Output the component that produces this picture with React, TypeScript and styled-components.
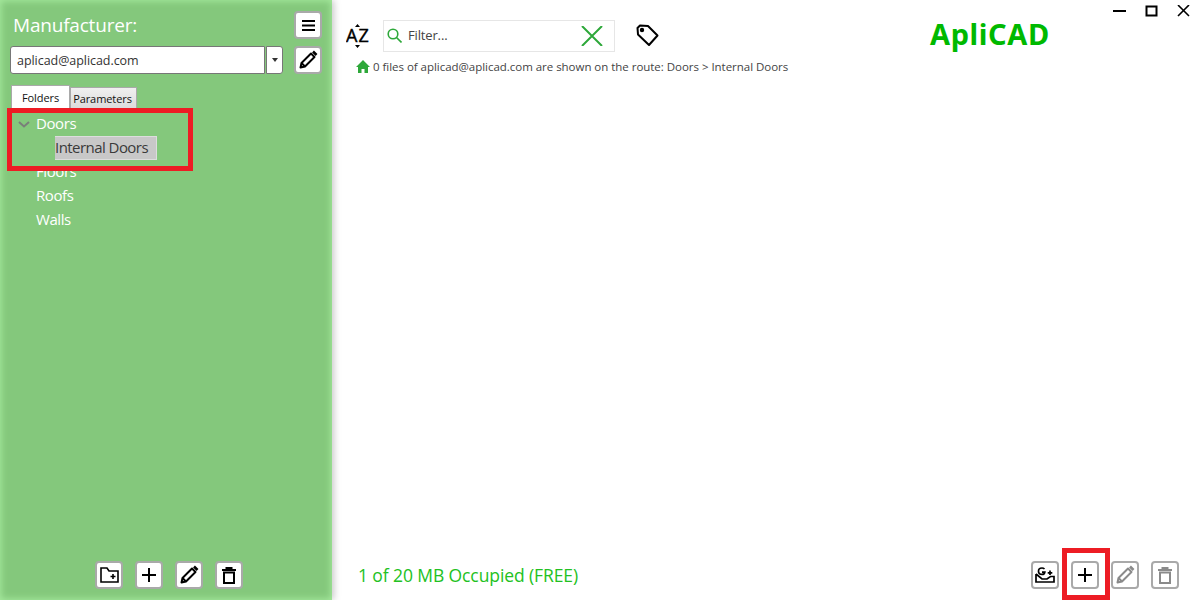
import React from "react";
import styled, {createGlobalStyle} from "styled-components";

const GlobalStyle = createGlobalStyle`
  html, body {
    margin: 0;
    padding: 0;
    background: #fff;
    font-family: "Open Sans", "Noto Sans", sans-serif;
  }
`;

const Window = styled.div`
  display: flex;
  width: 1200px;
  height: 600px;
  overflow: hidden;
  position: relative;
`;

const Sidebar = styled.aside`
  position: relative;
  width: 332px;
  height: 600px;
  flex-shrink: 0;
  box-sizing: border-box;
  padding: 11px 10px 11px 10px;
  display: flex;
  flex-direction: column;
  background: #84c87c;
  box-shadow: inset 0 0 7px 1px #a6ea9e, 2px 0 7px rgba(0, 0, 0, 0.22);
`;

const SideHeader = styled.div`
  display: flex;
  justify-content: space-between;
  align-items: center;
  height: 28px;
  padding-left: 3px;
`;

const SideTitle = styled.h1`
  margin: 0;
  font-size: 19px;
  font-weight: 400;
  letter-spacing: -0.2px;
  color: #fff;
`;

const IconButton = styled.button<{$muted?: boolean}>`
  width: 28px;
  height: 28px;
  padding: 0;
  box-sizing: border-box;
  display: flex;
  align-items: center;
  justify-content: center;
  background: #fff;
  border: 2px solid #a9a9a9;
  border-radius: 4px;
  color: ${p => (p.$muted ? "#8a8a8a" : "#000")};
`;

const ComboRow = styled.div`
  display: flex;
  align-items: center;
  height: 28px;
  margin-top: 7px;
`;

const ComboField = styled.div`
  width: 256px;
  height: 28px;
  box-sizing: border-box;
  display: flex;
  align-items: center;
  padding-left: 6px;
  background: #fff;
  border: 1px solid #777;
  border-radius: 3px 0 0 3px;
  font-size: 12.5px;
  letter-spacing: -0.05px;
  color: #333;
`;

const ComboArrow = styled.div`
  width: 17px;
  height: 28px;
  margin-left: 1px;
  box-sizing: border-box;
  display: flex;
  align-items: center;
  justify-content: center;
  background: #fff;
  border: 1px solid #777;
  border-radius: 0 3px 3px 0;

  &::after {
    content: "";
    border-left: 3.5px solid transparent;
    border-right: 3.5px solid transparent;
    border-top: 4px solid #333;
  }
`;

const ComboEdit = styled.div`
  margin-left: 11px;
`;

const Tabs = styled.div`
  display: flex;
  align-items: flex-end;
  height: 23px;
  margin: 11px 0 0 1px;
`;

const Tab = styled.div<{$active?: boolean}>`
  box-sizing: border-box;
  display: flex;
  justify-content: center;
  align-items: center;
  height: ${p => (p.$active ? "23px" : "21px")};
  width: ${p => (p.$active ? "59px" : "67px")};
  padding-right: ${p => (p.$active ? "0" : "2px")};
  border: 1px solid #a9a9a9;
  border-bottom: none;
  background: ${p => (p.$active ? "#fff" : "linear-gradient(#f0f0f0, #dcdcdc)")};
  font-size: 11px;
  letter-spacing: -0.08px;
  color: #111;
`;

const Tree = styled.ul`
  list-style: none;
  margin: 3px 0 0;
  padding: 0;
  flex: 1;
`;

const TreeRow = styled.li<{$depth?: number}>`
  display: flex;
  align-items: center;
  height: 24px;
  padding-left: ${p => (p.$depth ? "35px" : "26px")};
  position: relative;
  font-size: 15px;
  letter-spacing: -0.42px;
  color: #fff;
`;

const TreeChevron = styled.svg`
  position: absolute;
  left: 8px;
  top: 10px;
`;

const TreeSelected = styled.span`
  box-sizing: border-box;
  display: flex;
  align-items: center;
  height: 24px;
  margin: 1px 0 0 10px;
  padding-bottom: 1px;
  width: 102px;
  background: #c8c8c8;
  border: 1px solid #ddd;
  border-left-width: 0;
  letter-spacing: -0.55px;
  color: #3a3a3a;
`;

const SideFooter = styled.div`
  display: flex;
  justify-content: center;
  gap: 12px;
  padding-left: 6px;
`;

const RedFrame = styled.div<{$left: number; $top: number; $w: number; $h: number}>`
  position: absolute;
  left: ${p => p.$left}px;
  top: ${p => p.$top}px;
  width: ${p => p.$w}px;
  height: ${p => p.$h}px;
  box-sizing: border-box;
  border: 5px solid #ed1c24;
  pointer-events: none;
`;

const Main = styled.main`
  flex: 1;
  height: 600px;
  box-sizing: border-box;
  padding-left: 14px;
  display: flex;
  flex-direction: column;
`;

const TopRow = styled.div`
  display: flex;
  justify-content: space-between;
  height: 51px;
`;

const Toolbar = styled.div`
  display: flex;
  align-items: center;
  padding-top: 20px;
  height: 31px;
`;

const SortIcon = styled.svg`
  display: block;
`;

const FilterBox = styled.div`
  width: 232px;
  height: 32px;
  box-sizing: border-box;
  margin-left: 13px;
  display: flex;
  align-items: center;
  padding: 0 11px 0 3px;
  border: 1px solid #e6e6e6;
`;

const FilterText = styled.span`
  flex: 1;
  margin: 0 0 2px 6px;
  font-size: 13px;
  letter-spacing: -0.15px;
  color: #444;
`;

const TagIcon = styled.div`
  display: flex;
  margin-left: 21px;
`;

const Logo = styled.div`
  margin: 0 0 4px 271px;
  font-family: "Noto Sans", "Open Sans", sans-serif;
  font-size: 29px;
  font-weight: 700;
  letter-spacing: 0.6px;
  color: #00b900;
`;

const WindowControls = styled.div`
  display: flex;
  align-items: flex-start;
  gap: 19px;
  padding: 5px 10px 0 0;
`;

const Breadcrumb = styled.div`
  display: flex;
  align-items: center;
  gap: 3px;
  height: 30px;
  padding: 0 0 0 10px;
  font-size: 11.5px;
  letter-spacing: -0.03px;
  color: #444;
`;

const Spacer = styled.div`
  flex: 1;
`;

const StatusRow = styled.div`
  display: flex;
  justify-content: space-between;
  align-items: center;
  height: 28px;
  margin-bottom: 11px;
  padding: 0 21px 0 12px;
`;

const StatusText = styled.span`
  font-size: 17.5px;
  letter-spacing: -0.1px;
  color: #22c122;
`;

const ActionGroup = styled.div`
  display: flex;
  gap: 12px;
`;

const PlusIcon = () => (
    <svg width="16" height="16" viewBox="0 0 16 16" fill="none" stroke="currentColor" strokeWidth="2">
        <path d="M8 1v14M1 8h14"/>
    </svg>
);

const PencilIcon = () => (
    <svg width="20" height="20" viewBox="0 0 20 20" fill="none" stroke="currentColor" strokeWidth="2" strokeLinejoin="round">
        <path d="M2.5 17.5l1-4.5L13 3.5l3.5 3.5L7 16.5z"/>
        <path d="M3.5 13L7 16.5"/>
        <path d="M15 1.5l3.5 3.5" strokeWidth="2.6"/>
    </svg>
);

const TrashIcon = () => (
    <svg width="14" height="17" viewBox="0 0 14 17" fill="none" stroke="currentColor" strokeWidth="2">
        <path d="M0 3h14M4.5 3V1h5v2"/>
        <rect x="2" y="5.5" width="10" height="10.5"/>
    </svg>
);

const FolderPlusIcon = () => (
    <svg width="19" height="16" viewBox="0 0 19 16" fill="none" stroke="currentColor" strokeWidth="1.6">
        <path d="M1 1h6l2 3h9v11H1z"/>
        <path d="M13 7v5M10.5 9.5h5"/>
    </svg>
);

const FolderGIcon = () => (
    <svg width="20" height="16" viewBox="0 0 20 16" fill="none" stroke="currentColor" strokeWidth="1.7">
        <path d="M1 7v8h18V9.5h-3.5L12 12H7L1 7"/>
        <path d="M9.5 2C8.8 1.3 8 1 7 1 5 1 3.5 2.4 3.5 4.2S5 7.4 7 7.4c1.5 0 2.5-.8 2.8-2.2H7"/>
        <path d="M15 3.5V8M12.7 5.8h4.6"/>
    </svg>
);

const MenuIcon = () => (
    <svg width="13" height="11" viewBox="0 0 13 11" fill="currentColor">
        <rect width="13" height="2"/>
        <rect y="4.5" width="13" height="2"/>
        <rect y="9" width="13" height="2"/>
    </svg>
);

export default function App() {
    return (
        <Window>
            <GlobalStyle/>
            <Sidebar>
                <SideHeader>
                    <SideTitle>Manufacturer:</SideTitle>
                    <IconButton aria-label="Menu"><MenuIcon/></IconButton>
                </SideHeader>
                <ComboRow>
                    <ComboField>aplicad@aplicad.com</ComboField>
                    <ComboArrow/>
                    <ComboEdit>
                        <IconButton aria-label="Edit manufacturer"><PencilIcon/></IconButton>
                    </ComboEdit>
                </ComboRow>
                <Tabs>
                    <Tab $active>Folders</Tab>
                    <Tab>Parameters</Tab>
                </Tabs>
                <Tree>
                    <TreeRow>
                        <TreeChevron width="12" height="7" viewBox="0 0 12 7" fill="none" stroke="#7a7f7a" strokeWidth="2">
                            <path d="M1 1l5 4.5L11 1"/>
                        </TreeChevron>
                        Doors
                    </TreeRow>
                    <TreeRow $depth={1}><TreeSelected>Internal Doors</TreeSelected></TreeRow>
                    <TreeRow>Floors</TreeRow>
                    <TreeRow>Roofs</TreeRow>
                    <TreeRow>Walls</TreeRow>
                </Tree>
                <SideFooter>
                    <IconButton aria-label="New folder"><FolderPlusIcon/></IconButton>
                    <IconButton aria-label="Add"><PlusIcon/></IconButton>
                    <IconButton aria-label="Edit"><PencilIcon/></IconButton>
                    <IconButton aria-label="Delete"><TrashIcon/></IconButton>
                </SideFooter>
                <RedFrame $left={7} $top={108} $w={186} $h={63}/>
            </Sidebar>
            <Main>
                <TopRow>
                    <Toolbar>
                        <SortIcon width="24" height="24" viewBox="0 0 24 24">
                            <path d="M11.5 0l2.5 3h-5zM11.5 24l2.5-3h-5z" fill="#000"/>
                            <text x="0" y="18" fontSize="18" fontFamily="Open Sans, sans-serif" stroke="#000" strokeWidth="0.4" fill="#000">A</text>
                            <text x="12.5" y="18" fontSize="18" fontFamily="Open Sans, sans-serif" stroke="#000" strokeWidth="0.4" fill="#000">Z</text>
                        </SortIcon>
                        <FilterBox>
                            <svg width="15" height="15" viewBox="0 0 15 15" fill="none" stroke="#2ea83a" strokeWidth="1.6">
                                <circle cx="6" cy="6" r="4.8"/>
                                <path d="M9.5 9.5l5 5"/>
                            </svg>
                            <FilterText>Filter...</FilterText>
                            <svg width="22" height="20" viewBox="0 0 22 20" fill="none" stroke="#2ea83a" strokeWidth="2">
                                <path d="M1 0l20 20M21 0L1 20"/>
                            </svg>
                        </FilterBox>
                        <TagIcon>
                            <svg width="23" height="23" viewBox="0 0 23 23" fill="none" stroke="#000" strokeWidth="2" strokeLinejoin="round">
                                <path d="M1.5 4L4 1.5l8 .5 9.5 9.5-8.5 9.5L2 10.5z"/>
                                <circle cx="6" cy="6" r="1.2" fill="#000"/>
                            </svg>
                        </TagIcon>
                        <Logo>ApliCAD</Logo>
                    </Toolbar>
                    <WindowControls>
                        <svg width="13" height="13" viewBox="0 0 13 13" stroke="#000" strokeWidth="2"><path d="M0 6h13"/></svg>
                        <svg width="13" height="13" viewBox="0 0 13 13" fill="none" stroke="#000" strokeWidth="2"><rect x="1.5" y="1.5" width="10" height="9"/></svg>
                        <svg width="13" height="13" viewBox="0 0 13 13" stroke="#000" strokeWidth="1.6"><path d="M1 0l11 11M12 0L1 11"/></svg>
                    </WindowControls>
                </TopRow>
                <Breadcrumb>
                    <svg width="14" height="13" viewBox="0 0 14 13" fill="#2ea83a">
                        <path d="M7 0L0 7h2v6h3.5V9h3v4H12V7h2z"/>
                    </svg>
                    0 files of aplicad@aplicad.com are shown on the route: Doors &gt; Internal Doors
                </Breadcrumb>
                <Spacer/>
                <StatusRow>
                    <StatusText>1 of 20 MB Occupied (FREE)</StatusText>
                    <ActionGroup>
                        <IconButton aria-label="Import"><FolderGIcon/></IconButton>
                        <IconButton aria-label="Add file"><PlusIcon/></IconButton>
                        <IconButton $muted aria-label="Edit file"><PencilIcon/></IconButton>
                        <IconButton $muted aria-label="Delete file"><TrashIcon/></IconButton>
                    </ActionGroup>
                </StatusRow>
                <RedFrame $left={1062} $top={548} $w={48} $h={52}/>
            </Main>
        </Window>
    );
}
